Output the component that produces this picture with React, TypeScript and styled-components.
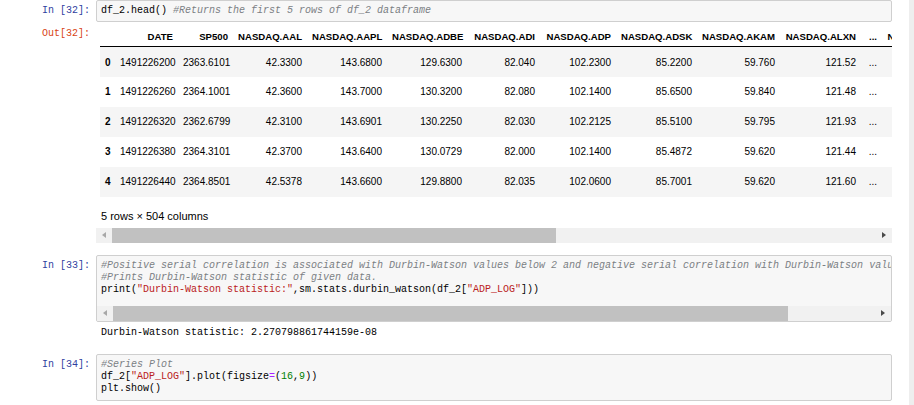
import React from "react";
import styled, { createGlobalStyle } from "styled-components";

const GlobalStyle = createGlobalStyle`
  html, body {
    margin: 0;
    padding: 0;
    background: #ffffff;
  }
  body {
    font-family: "Liberation Sans", Arial, sans-serif;
    overflow: hidden;
  }
`;

type Kind = "plain" | "comment" | "string" | "number" | "operator";

const tokenColors: Record<Kind, string> = {
  plain: "#000000",
  comment: "#7b7f84",
  string: "#ba2121",
  number: "#008000",
  operator: "#aa22ff",
};

const columns = [
  { name: "", width: 15 },
  { name: "DATE", width: 63 },
  { name: "SP500", width: 55 },
  { name: "NASDAQ.AAL", width: 74 },
  { name: "NASDAQ.AAPL", width: 80 },
  { name: "NASDAQ.ADBE", width: 80 },
  { name: "NASDAQ.ADI", width: 73 },
  { name: "NASDAQ.ADP", width: 76 },
  { name: "NASDAQ.ADSK", width: 81 },
  { name: "NASDAQ.AKAM", width: 83 },
  { name: "NASDAQ.ALXN", width: 81 },
  { name: "...", width: 21 },
  { name: "NYSE.WAT", width: 60 },
];

const tableWidth = columns.reduce((sum, c) => sum + c.width, 0);

const rows = [
  ["1491226200", "2363.6101", "42.3300", "143.6800", "129.6300", "82.040", "102.2300", "85.2200", "59.760", "121.52", "...", "178.10"],
  ["1491226260", "2364.1001", "42.3600", "143.7000", "130.3200", "82.080", "102.1400", "85.6500", "59.840", "121.48", "...", "178.29"],
  ["1491226320", "2362.6799", "42.3100", "143.6901", "130.2250", "82.030", "102.2125", "85.5100", "59.795", "121.93", "...", "178.22"],
  ["1491226380", "2364.3101", "42.3700", "143.6400", "130.0729", "82.000", "102.1400", "85.4872", "59.620", "121.44", "...", "178.21"],
  ["1491226440", "2364.8501", "42.5378", "143.6600", "129.8800", "82.035", "102.0600", "85.7001", "59.620", "121.60", "...", "178.15"],
];

const Page = styled.div`
  display: flex;
  height: 405px;
`;

const Notebook = styled.div`
  flex: 1;
  min-width: 0;
  padding-right: 17px;
`;

const Gutter = styled.div`
  width: 5px;
  background: #eeeeee;
`;

const Cell = styled.div<{ $gap: number }>`
  display: flex;
  margin-top: ${(p) => p.$gap}px;
`;

const Prompt = styled.div<{ $out?: boolean; $top: number }>`
  flex-shrink: 0;
  width: 90px;
  padding-right: 6px;
  padding-top: ${(p) => p.$top}px;
  text-align: right;
  font-family: "Liberation Mono", "DejaVu Sans Mono", monospace;
  font-size: 10px;
  line-height: 12.3px;
  color: ${(p) => (p.$out ? "#d84315" : "#303f9f")};
`;

const InputBox = styled.div`
  flex: 1;
  min-width: 0;
  border: 1px solid #cfcfcf;
  border-radius: 2px;
  background: #f7f7f7;
  overflow: hidden;
`;

const CodeLines = styled.pre<{ $bottom?: number }>`
  margin: 0;
  padding: 4px 4px ${(p) => p.$bottom ?? 4}px 4px;
  font-family: "Liberation Mono", "DejaVu Sans Mono", monospace;
  font-size: 10px;
  line-height: 12.3px;
  color: #000000;
  white-space: pre;
  overflow: hidden;
`;

const Token = styled.span<{ $kind: Kind }>`
  color: ${(p) => tokenColors[p.$kind]};
  font-style: ${(p) => (p.$kind === "comment" ? "italic" : "normal")};
`;

const OutputArea = styled.div`
  flex: 1;
  min-width: 0;
`;

const TableScroller = styled.div`
  padding-left: 4px;
  overflow: hidden;
`;

const Frame = styled.table`
  width: ${tableWidth}px;
  table-layout: fixed;
  border-collapse: collapse;
  border-spacing: 0;
  font-size: 10px;
  color: #000000;

  thead th {
    height: 20px;
    padding: 0 5px;
    border-bottom: 1px solid #000000;
    font-size: 9.6px;
    font-weight: bold;
    text-align: right;
    white-space: nowrap;
    vertical-align: middle;
    overflow: hidden;
  }

  tbody tr {
    height: 30px;
  }

  tbody tr:nth-child(odd) {
    background: #f5f5f5;
  }

  tbody td,
  tbody th {
    padding: 0 5px;
    text-align: right;
    white-space: nowrap;
    vertical-align: middle;
    overflow: hidden;
  }

  tbody th {
    font-weight: bold;
  }
`;

const Caption = styled.p`
  margin: 13px 0 5px 5px;
  font-size: 11px;
  line-height: 13px;
  color: #000000;
`;

const ScrollBar = styled.div<{ $bg: string }>`
  display: flex;
  align-items: center;
  height: 15px;
  background: ${(p) => p.$bg};
`;

const ArrowButton = styled.div`
  flex-shrink: 0;
  width: 16px;
  height: 15px;
  display: flex;
  align-items: center;
  justify-content: center;
`;

const Arrow = styled.span<{ $dir: "left" | "right" }>`
  width: 0;
  height: 0;
  border-top: 3.5px solid transparent;
  border-bottom: 3.5px solid transparent;
  ${(p) =>
    p.$dir === "left"
      ? "border-right: 4px solid #a8a8a8;"
      : "border-left: 4px solid #4a4a4a;"}
`;

const Track = styled.div`
  flex: 1;
  height: 15px;
  display: flex;
  align-items: stretch;
`;

const Thumb = styled.div<{ $width: number }>`
  width: ${(p) => p.$width}px;
  background: #c1c1c1;
`;

const OutputText = styled.pre`
  margin: 0;
  padding: 0 5px;
  font-family: "Liberation Mono", "DejaVu Sans Mono", monospace;
  font-size: 10px;
  line-height: 12.3px;
  color: #000000;
`;

function HScroll({ bg, thumb }: { bg: string; thumb: number }) {
  return (
    <ScrollBar $bg={bg}>
      <ArrowButton>
        <Arrow $dir="left" />
      </ArrowButton>
      <Track>
        <Thumb $width={thumb} />
      </Track>
      <ArrowButton>
        <Arrow $dir="right" />
      </ArrowButton>
    </ScrollBar>
  );
}

const T = ({ k, children }: { k: Kind; children: React.ReactNode }) => (
  <Token $kind={k}>{children}</Token>
);

export default function App() {
  return (
    <>
      <GlobalStyle />
      <Page>
        <Notebook>
          <Cell $gap={0}>
            <Prompt $top={5}>In [32]:</Prompt>
            <InputBox>
              <CodeLines>
                df_2.head() <T k="comment">#Returns the first 5 rows of df_2 dataframe</T>
              </CodeLines>
            </InputBox>
          </Cell>

          <Cell $gap={4}>
            <Prompt $out $top={1.5}>
              Out[32]:
            </Prompt>
            <OutputArea>
              <TableScroller>
                <Frame>
                  <colgroup>
                    {columns.map((c, i) => (
                      <col key={i} style={{ width: c.width }} />
                    ))}
                  </colgroup>
                  <thead>
                    <tr>
                      {columns.map((c, i) => (
                        <th key={i}>{c.name}</th>
                      ))}
                    </tr>
                  </thead>
                  <tbody>
                    {rows.map((r, i) => (
                      <tr key={i}>
                        <th>{i}</th>
                        {r.map((v, j) => (
                          <td key={j}>{v}</td>
                        ))}
                      </tr>
                    ))}
                  </tbody>
                </Frame>
              </TableScroller>
              <Caption>5 rows × 504 columns</Caption>
              <HScroll bg="#f1f1f1" thumb={444} />
            </OutputArea>
          </Cell>

          <Cell $gap={12}>
            <Prompt $top={5}>In [33]:</Prompt>
            <InputBox>
              <CodeLines $bottom={9}>
                <T k="comment">
                  #Positive serial correlation is associated with Durbin-Watson values below 2 and negative serial correlation with Durbin-Watson values above 2.
                </T>
                {"\n"}
                <T k="comment">#Prints Durbin-Watson statistic of given data.</T>
                {"\n"}
                print(<T k="string">"Durbin-Watson statistic:"</T>,sm.stats.durbin_watson(df_2[
                <T k="string">"ADP_LOG"</T>]))
              </CodeLines>
              <HScroll bg="#f1f1f1" thumb={675} />
            </InputBox>
          </Cell>

          <Cell $gap={5}>
            <Prompt $top={0} />
            <OutputArea>
              <OutputText>Durbin-Watson statistic: 2.270798861744159e-08</OutputText>
            </OutputArea>
          </Cell>

          <Cell $gap={14.7}>
            <Prompt $top={5}>In [34]:</Prompt>
            <InputBox>
              <CodeLines>
                <T k="comment">#Series Plot</T>
                {"\n"}
                df_2[<T k="string">"ADP_LOG"</T>].plot(figsize<T k="operator">=</T>(
                <T k="number">16</T>,<T k="number">9</T>)){"\n"}
                plt.show()
              </CodeLines>
            </InputBox>
          </Cell>
        </Notebook>
        <Gutter />
      </Page>
    </>
  );
}
